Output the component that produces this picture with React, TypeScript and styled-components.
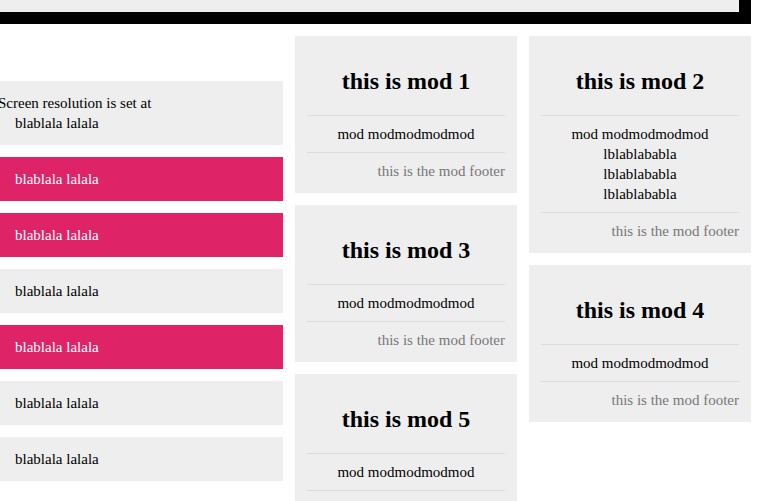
import React from "react";
import styled, { createGlobalStyle } from "styled-components";

const Global = createGlobalStyle`
  html, body { margin: 0; padding: 0; background: #fff; }
  body {
    font-family: "Liberation Serif", "Times New Roman", serif;
    font-size: 15px;
    line-height: 20px;
    color: #000;
    overflow: hidden;
  }
`;

const Page = styled.div`
  width: 751px;
`;

const TopBar = styled.div`
  height: 12px;
  background: #eee;
  border-right: 12px solid #000;
  border-bottom: 12px solid #000;
`;

const Layout = styled.div`
  display: grid;
  grid-template-columns: 283px 222px 222px;
  column-gap: 12px;
  margin-top: 12px;
  align-items: start;
`;

const Nav = styled.ul`
  list-style: none;
  margin: 0;
  padding: 45px 0 0;
  display: flex;
  flex-direction: column;
  gap: 12px;
`;

const NavItem = styled.li<{ $active?: boolean }>`
  padding: 12px 15px;
  background: ${(p) => (p.$active ? "#de2366" : "#eee")};
  color: ${(p) => (p.$active ? "#fff" : "#000")};
`;

const Notice = styled.span`
  display: block;
  margin-left: -17px;
  white-space: nowrap;
`;

const Column = styled.div`
  display: flex;
  flex-direction: column;
  gap: 12px;
`;

const Mod = styled.section`
  background: #eee;
  padding: 0 12px 12px;
  display: flow-root;
`;

const ModHead = styled.h2`
  margin: 0;
  padding: 32px 0 20px;
  font-size: 24px;
  line-height: 27px;
  font-weight: bold;
  text-align: center;
  border-bottom: 1px solid #dcdcdc;
`;

const ModBody = styled.div`
  padding: 8px 0;
  text-align: center;
  border-bottom: 1px solid #dcdcdc;
`;

const ModFoot = styled.div`
  padding-top: 8px;
  text-align: right;
  color: #777;
`;

type ModData = { title: string; lines: string[] };

const ModCard = ({ title, lines }: ModData) => (
  <Mod>
    <ModHead>{title}</ModHead>
    <ModBody>
      {lines.map((l, i) => (
        <div key={i}>{l}</div>
      ))}
    </ModBody>
    <ModFoot>this is the mod footer</ModFoot>
  </Mod>
);

const navItems = [false, true, true, false, true, false, false];
const base = "mod modmodmodmod";

export default function App() {
  return (
    <Page>
      <Global />
      <TopBar />
      <Layout>
        <Nav>
          {navItems.map((active, i) => (
            <NavItem key={i} $active={active}>
              {i === 0 && <Notice>Screen resolution is set at</Notice>}
              blablala lalala
            </NavItem>
          ))}
        </Nav>
        <Column>
          <ModCard title="this is mod 1" lines={[base]} />
          <ModCard title="this is mod 3" lines={[base]} />
          <ModCard title="this is mod 5" lines={[base]} />
        </Column>
        <Column>
          <ModCard
            title="this is mod 2"
            lines={[base, "lblablababla", "lblablababla", "lblablababla"]}
          />
          <ModCard title="this is mod 4" lines={[base]} />
        </Column>
      </Layout>
    </Page>
  );
}
